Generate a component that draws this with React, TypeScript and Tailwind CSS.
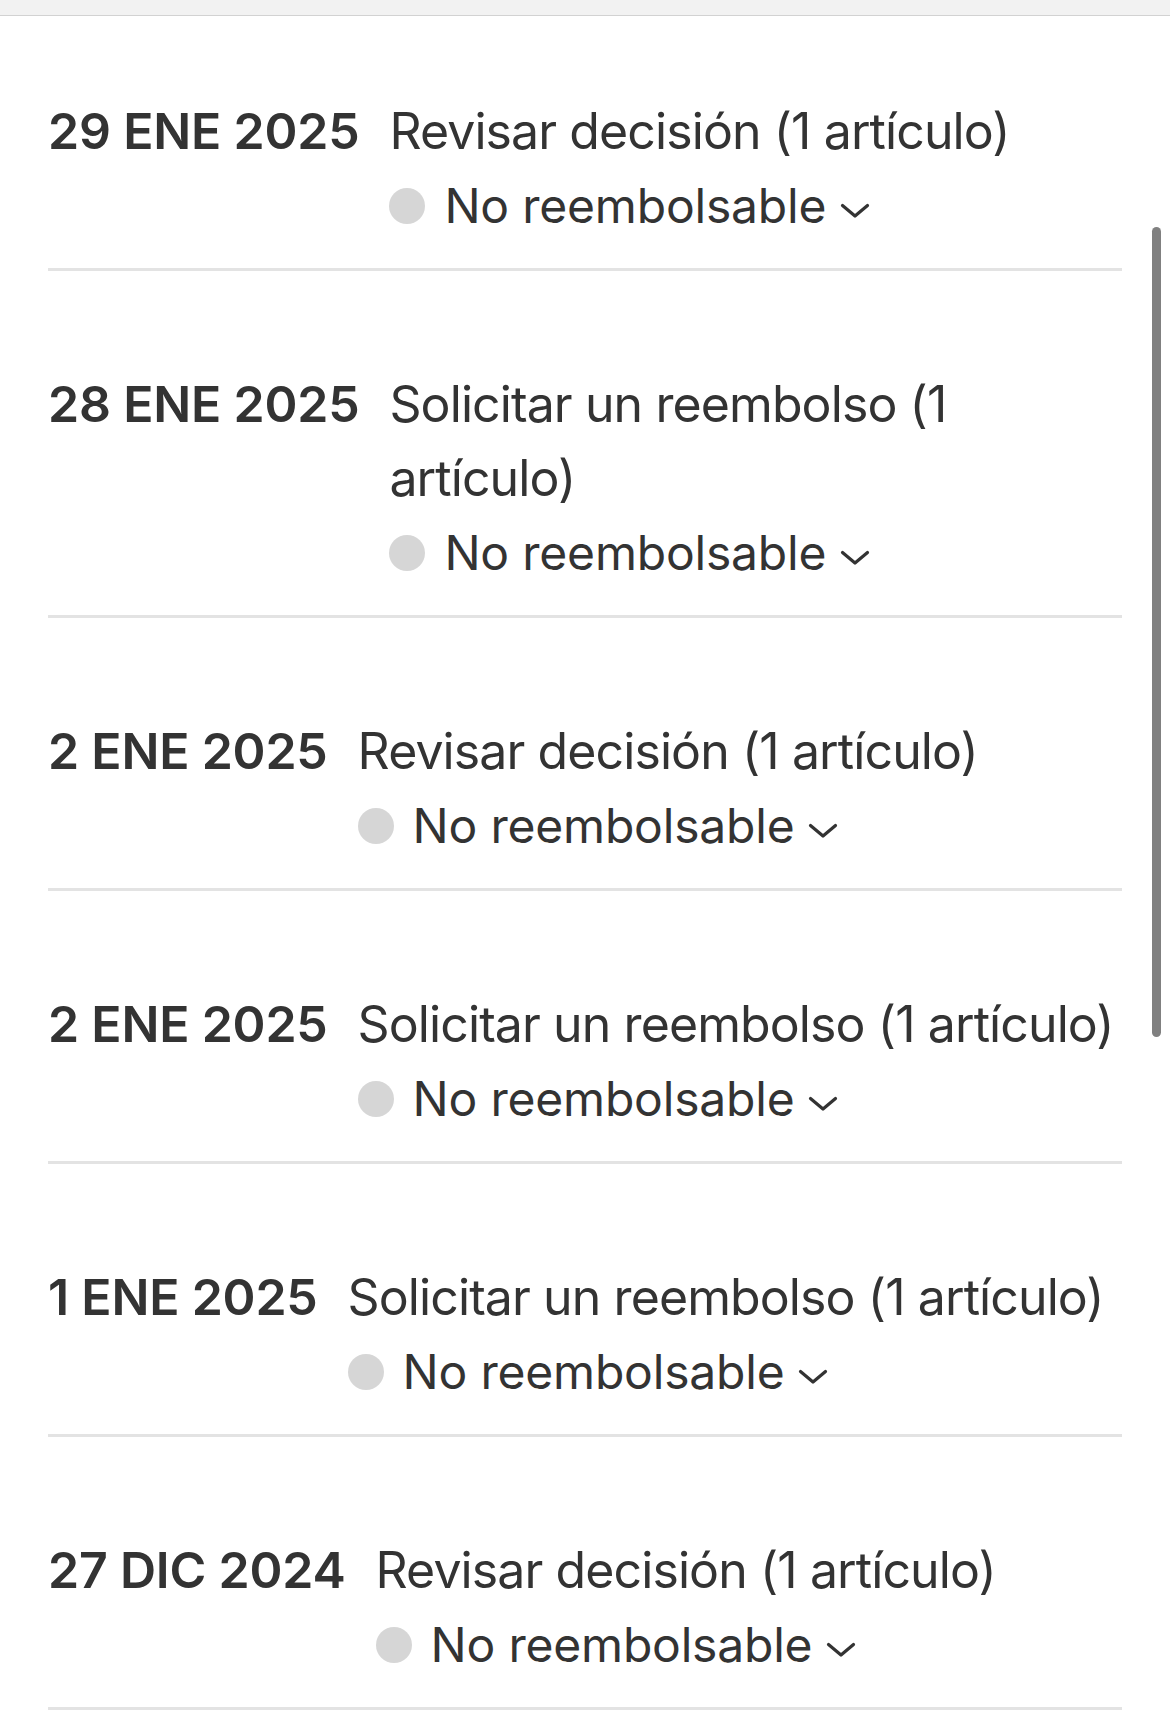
const rows = [
  { date: "29 ENE 2025", title: "Revisar decisión (1 artículo)" },
  { date: "28 ENE 2025", title: "Solicitar un reembolso (1 artículo)" },
  { date: "2 ENE 2025", title: "Revisar decisión (1 artículo)" },
  { date: "2 ENE 2025", title: "Solicitar un reembolso (1 artículo)" },
  { date: "1 ENE 2025", title: "Solicitar un reembolso (1 artículo)" },
  { date: "27 DIC 2024", title: "Revisar decisión (1 artículo)" },
]

function Chevron() {
  return (
    <svg width="30" height="16" viewBox="0 0 30 16" fill="none" className="ml-[14px] mt-[10px]">
      <path d="M2.5 2.5 L15 13 L27.5 2.5" stroke="#333" strokeWidth="3.2" strokeLinecap="round" strokeLinejoin="round" />
    </svg>
  )
}

function Row({ date, title, first }: { date: string; title: string; first?: boolean }) {
  return (
    <div className={`flex border-b-[3px] border-[#e3e3e3] pb-[25px] ${first ? "pt-[78px]" : "pt-24"}`}>
      <div className="shrink-0 text-[50px] font-semibold leading-[74px] tracking-[-0.2px] text-[#333]">{date}</div>
      <div className="ml-[30px] flex flex-1 flex-col">
        <div className="text-[50px] leading-[74px] tracking-[-0.9px] text-[#333]">{title}</div>
        <div className="flex items-center text-[48px] leading-[75px] tracking-[-0.2px] text-[#333]">
          <span className="mr-[19px] h-9 w-9 shrink-0 rounded-full bg-[#d6d6d6]" />
          <span>No reembolsable</span>
          <Chevron />
        </div>
      </div>
    </div>
  )
}

export default function App() {
  return (
    <div className="relative min-h-[1715px] bg-white font-['Inter','Noto_Sans',sans-serif]">
      <div className="h-4 border-b border-[#d2d2d2] bg-[#f2f2f2]" />
      <div className="px-12">
        {rows.map((r, i) => (
          <Row key={i} date={r.date} title={r.title} first={i === 0} />
        ))}
      </div>
      <div className="absolute left-[1152px] top-[227px] h-[810px] w-[9px] rounded-full bg-[#808080]" />
    </div>
  )
}
